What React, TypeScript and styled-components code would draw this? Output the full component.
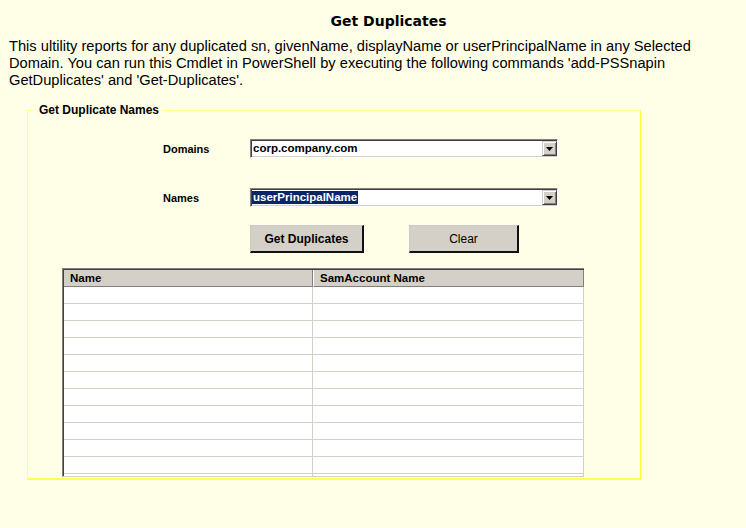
import React from "react";
import styled, { createGlobalStyle } from "styled-components";

const GlobalStyle = createGlobalStyle`
  html, body {
    margin: 0;
    padding: 0;
    background: #ffffe7;
  }
  body {
    font-family: "Liberation Sans", Arial, sans-serif;
    color: #000;
  }
`;

const Page = styled.div`
  box-sizing: border-box;
  width: 746px;
  min-height: 528px;
  padding: 13px 9px 0 9px;
  background: #ffffe7;
`;

const Title = styled.h1`
  margin: 0;
  padding-left: 31px;
  text-align: center;
  font-family: "DejaVu Sans", Verdana, sans-serif;
  font-weight: bold;
  font-size: 14px;
  line-height: 17px;
`;

const Intro = styled.p`
  margin: 8px 0 0 0;
  font-size: 14.67px;
  line-height: 17px;
`;

const Fieldset = styled.fieldset`
  box-sizing: border-box;
  width: 614px;
  min-width: 0;
  margin: 14px 0 0 18px;
  padding: 0 0 1px 0;
  border-style: solid;
  border-width: 1px 1px 2px 1px;
  border-color: #ffff8c #ffff3a #ffff50 #ffff8c;
`;

const Legend = styled.legend`
  margin-left: 6px;
  padding: 0 4px 0 5px;
  font-weight: bold;
  font-size: 12px;
  line-height: 15px;
`;

const FieldRow = styled.div<{ $top: number }>`
  display: flex;
  align-items: center;
  margin-top: ${(p) => p.$top}px;
  margin-left: 135px;
`;

const Label = styled.span`
  width: 87px;
  font-weight: bold;
  font-size: 11px;
`;

const Combo = styled.div`
  box-sizing: border-box;
  width: 308px;
  height: 19px;
  display: flex;
  align-items: center;
  padding-left: 1px;
  background: #fff;
  border: 1px solid;
  border-color: #808080 #ffffff #ffffff #808080;
  box-shadow: inset 1px 1px 0 #404040, inset -1px -1px 0 #d4d0c8;
`;

const ComboText = styled.span<{ $selected?: boolean }>`
  flex: 1;
  display: flex;
  align-items: center;
  font-weight: bold;
  font-size: 11.5px;
  line-height: 13px;
  span {
    display: inline-block;
    padding: 0 1px;
    background: ${(p) => (p.$selected ? "#0a246a" : "transparent")};
    color: ${(p) => (p.$selected ? "#fff" : "#000")};
  }
`;

const DropButton = styled.span`
  box-sizing: border-box;
  width: 15px;
  height: 15px;
  display: flex;
  align-items: center;
  justify-content: center;
  background: #d4d0c8;
  border: 1px solid;
  border-color: #d4d0c8 #404040 #404040 #d4d0c8;
  box-shadow: inset 1px 1px 0 #fff, inset -1px -1px 0 #808080;
`;

const ButtonRow = styled.div`
  display: flex;
  gap: 45px;
  margin: 18px 0 0 222px;
`;

const Button = styled.button<{ $w: number; $bold?: boolean }>`
  box-sizing: border-box;
  width: ${(p) => p.$w}px;
  height: 28px;
  margin: 0;
  padding: 0;
  background: #d4d0c8;
  border-style: dotted solid solid dotted;
  border-width: 1px 2px 2px 1px;
  border-color: #c4c4c4 #111 #111 #c4c4c4;
  font-family: "Liberation Sans", Arial, sans-serif;
  font-size: 12px;
  font-weight: ${(p) => (p.$bold ? "bold" : "normal")};
  color: #000;
`;

const ListFrame = styled.div`
  box-sizing: border-box;
  width: 522px;
  height: 209px;
  margin: 15px 0 0 34px;
  overflow: hidden;
  border-top: 1px solid #808080;
  border-left: 1px solid #808080;
  border-bottom: 1px solid #d4d0c8;
  background: #fff;
`;

const ListInner = styled.div`
  border-top: 1px solid #404040;
  border-left: 1px solid #404040;
`;

const GridRow = styled.div`
  display: grid;
  grid-template-columns: 249px 271px;
`;

const HeadCell = styled.div<{ $first?: boolean }>`
  box-sizing: border-box;
  height: 17px;
  padding: 1px 0 0 6px;
  background: #d4d0c8;
  border-bottom: 1px solid #808080;
  border-right: 1px solid #808080;
  border-left: ${(p) => (p.$first ? "0" : "1px solid #fff")};
  font-weight: bold;
  font-size: 11.5px;
  line-height: 15px;
  white-space: nowrap;
`;

const Cell = styled.div`
  box-sizing: border-box;
  height: 17px;
  background: #fff;
  border-bottom: 1px solid #d4d0c8;
  border-right: 1px solid #d4d0c8;
`;

const Caret = () => (
  <svg width="7" height="4" viewBox="0 0 7 4" aria-hidden="true">
    <polygon points="0,0 7,0 3.5,4" fill="#000" />
  </svg>
);

const rows = Array.from({ length: 12 }, (_, i) => i);

export default function App() {
  return (
    <>
      <GlobalStyle />
      <Page>
        <Title>Get Duplicates</Title>
        <Intro>
          This ultility reports for any duplicated sn, givenName, displayName or userPrincipalName in any
          Selected Domain. You can run this Cmdlet in PowerShell by executing the following commands
          'add-PSSnapin GetDuplicates' and 'Get-Duplicates'.
        </Intro>
        <Fieldset>
          <Legend>Get Duplicate Names</Legend>
          <FieldRow $top={21}>
            <Label>Domains</Label>
            <Combo>
              <ComboText>
                <span>corp.company.com</span>
              </ComboText>
              <DropButton>
                <Caret />
              </DropButton>
            </Combo>
          </FieldRow>
          <FieldRow $top={30}>
            <Label>Names</Label>
            <Combo>
              <ComboText $selected>
                <span>userPrincipalName</span>
              </ComboText>
              <DropButton>
                <Caret />
              </DropButton>
            </Combo>
          </FieldRow>
          <ButtonRow>
            <Button $w={114} $bold>
              Get Duplicates
            </Button>
            <Button $w={110}>Clear</Button>
          </ButtonRow>
          <ListFrame>
            <ListInner>
              <GridRow>
                <HeadCell $first>Name</HeadCell>
                <HeadCell>SamAccount Name</HeadCell>
              </GridRow>
              {rows.map((r) => (
                <GridRow key={r}>
                  <Cell />
                  <Cell />
                </GridRow>
              ))}
            </ListInner>
          </ListFrame>
        </Fieldset>
      </Page>
    </>
  );
}
